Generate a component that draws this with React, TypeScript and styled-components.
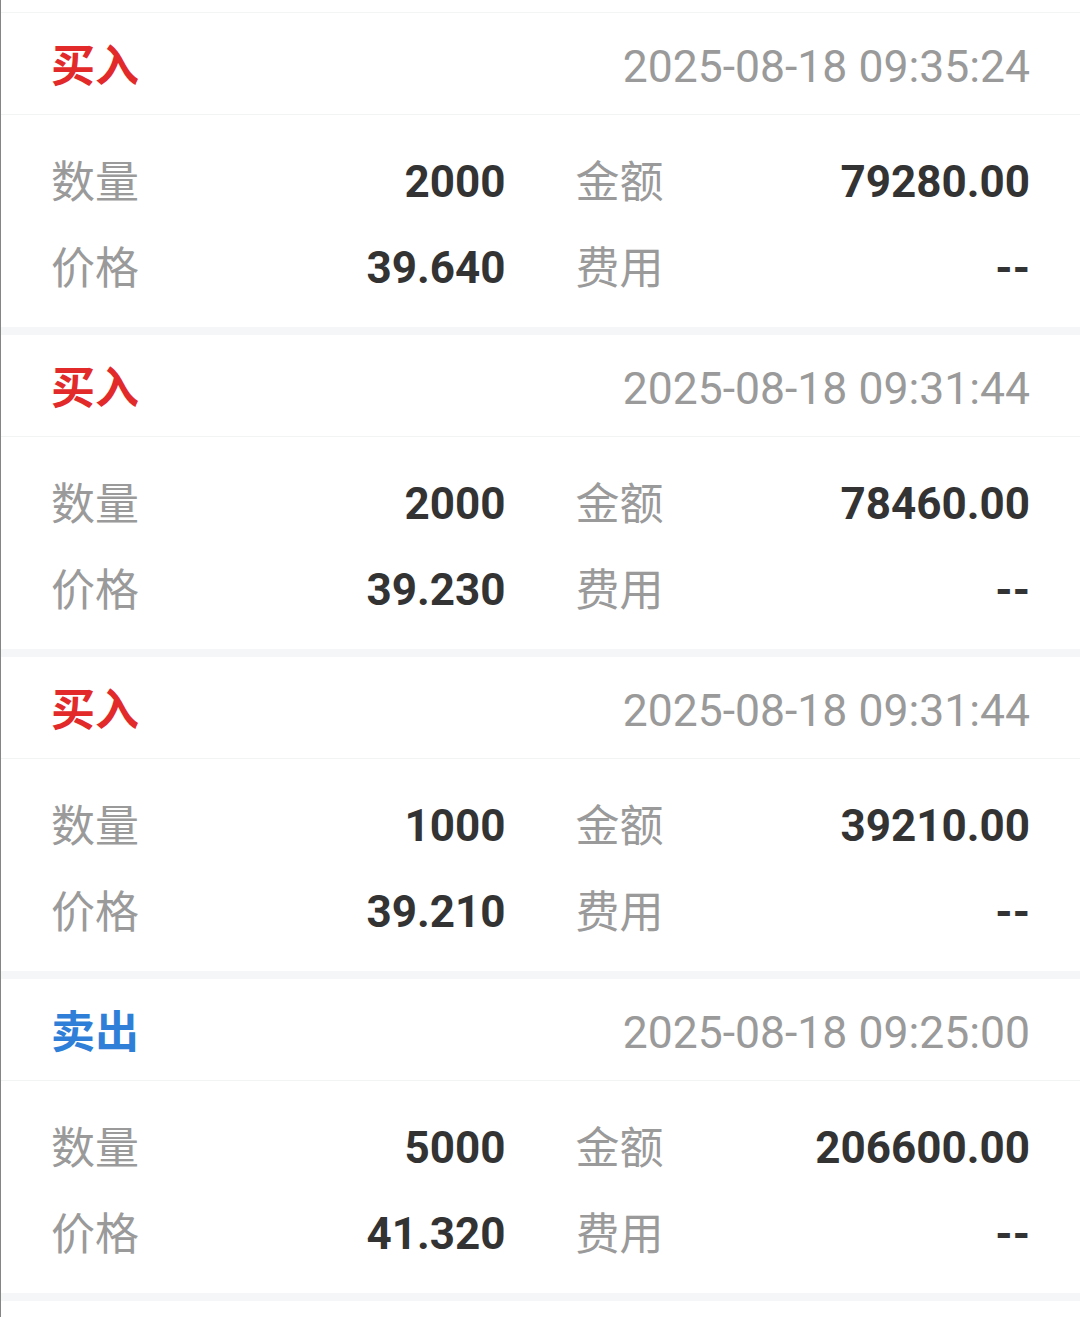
import React, { FC } from 'react';
import styled, { createGlobalStyle } from 'styled-components';

// === 型定義 ===
interface Trade {
  side: 'buy' | 'sell';
  time: string;
  qty: string;
  amount: string;
  price: string;
  fee: string;
}

const trades: Trade[] = [
  { side: 'buy',  time: '2025-08-18 09:35:24', qty: '2000', amount: '79280.00',  price: '39.640', fee: '--' },
  { side: 'buy',  time: '2025-08-18 09:31:44', qty: '2000', amount: '78460.00',  price: '39.230', fee: '--' },
  { side: 'buy',  time: '2025-08-18 09:31:44', qty: '1000', amount: '39210.00',  price: '39.210', fee: '--' },
  { side: 'sell', time: '2025-08-18 09:25:00', qty: '5000', amount: '206600.00', price: '41.320', fee: '--' },
];

// === ▽ Component ▽ ===
const Field: FC<{ label: string; value: string }> = ({ label, value }) => (
  <FieldRow>
    <Label>{label}</Label>
    <Value>{value}</Value>
  </FieldRow>
);

const TradeCard: FC<{ trade: Trade }> = ({ trade }) => (
  <Card>
    <CardHeader>
      <SideTag $side={trade.side}>{trade.side === 'buy' ? '买入' : '卖出'}</SideTag>
      <Time>{trade.time}</Time>
    </CardHeader>
    <CardBody>
      <Field label="数量" value={trade.qty} />
      <Field label="金额" value={trade.amount} />
      <Field label="价格" value={trade.price} />
      <Field label="费用" value={trade.fee} />
    </CardBody>
  </Card>
);

const App: FC = () => (
  <>
    <GlobalStyle />
    <Page>
      <List>
        {trades.map((t, i) => <TradeCard key={i} trade={t} />)}
      </List>
    </Page>
  </>
);

// === ▽ style ▽ ===
const GlobalStyle = createGlobalStyle`
  html, body { margin: 0; padding: 0; background: #ffffff; }
  body { font-family: Roboto, "Noto Sans CJK SC", sans-serif; }
`;

const Page = styled.div`
  min-height: 1317px;
  box-sizing: border-box;
  padding-top: 12px;
  border-left: 1px solid #858585;
  background: #ffffff;
`;

const List = styled.div`
  border-top: 1px solid #f3f5f4;
  display: flex;
  flex-direction: column;
`;

const Card = styled.section`
  background: #ffffff;
  border-bottom: 8px solid #f5f6f8;
`;

const CardHeader = styled.header`
  display: flex;
  align-items: center;
  justify-content: space-between;
  height: 97px;
  padding: 4px 50px 0 50px;
  border-bottom: 1px solid #f2f4f3;
`;

const SideTag = styled.span<{ $side: 'buy' | 'sell' }>`
  font-family: "Noto Sans CJK SC", sans-serif;
  font-size: 44px;
  font-weight: 700;
  margin-bottom: 6px;
  color: ${(p) => (p.$side === 'buy' ? '#e32a2a' : '#2f7fd9')};
`;

const Time = styled.span`
  font-family: Roboto, sans-serif;
  font-size: 44.5px;
  margin-top: 2px;
  color: #9a9a9a;
`;

const CardBody = styled.div`
  display: grid;
  grid-template-columns: 1fr 1fr;
  grid-auto-rows: 86px;
  column-gap: 70px;
  padding: 24px 50px 16px 50px;
  height: 212px;
  box-sizing: border-box;
`;

const FieldRow = styled.div`
  display: flex;
  align-items: center;
  justify-content: space-between;
`;

const Label = styled.span`
  font-family: "Noto Sans CJK SC", sans-serif;
  font-size: 44px;
  color: #9a9a9a;
  margin-bottom: 6px;
`;

const Value = styled.span`
  font-family: Roboto, sans-serif;
  font-size: 44px;
  font-weight: 700;
  color: #333333;
`;

export default App;
